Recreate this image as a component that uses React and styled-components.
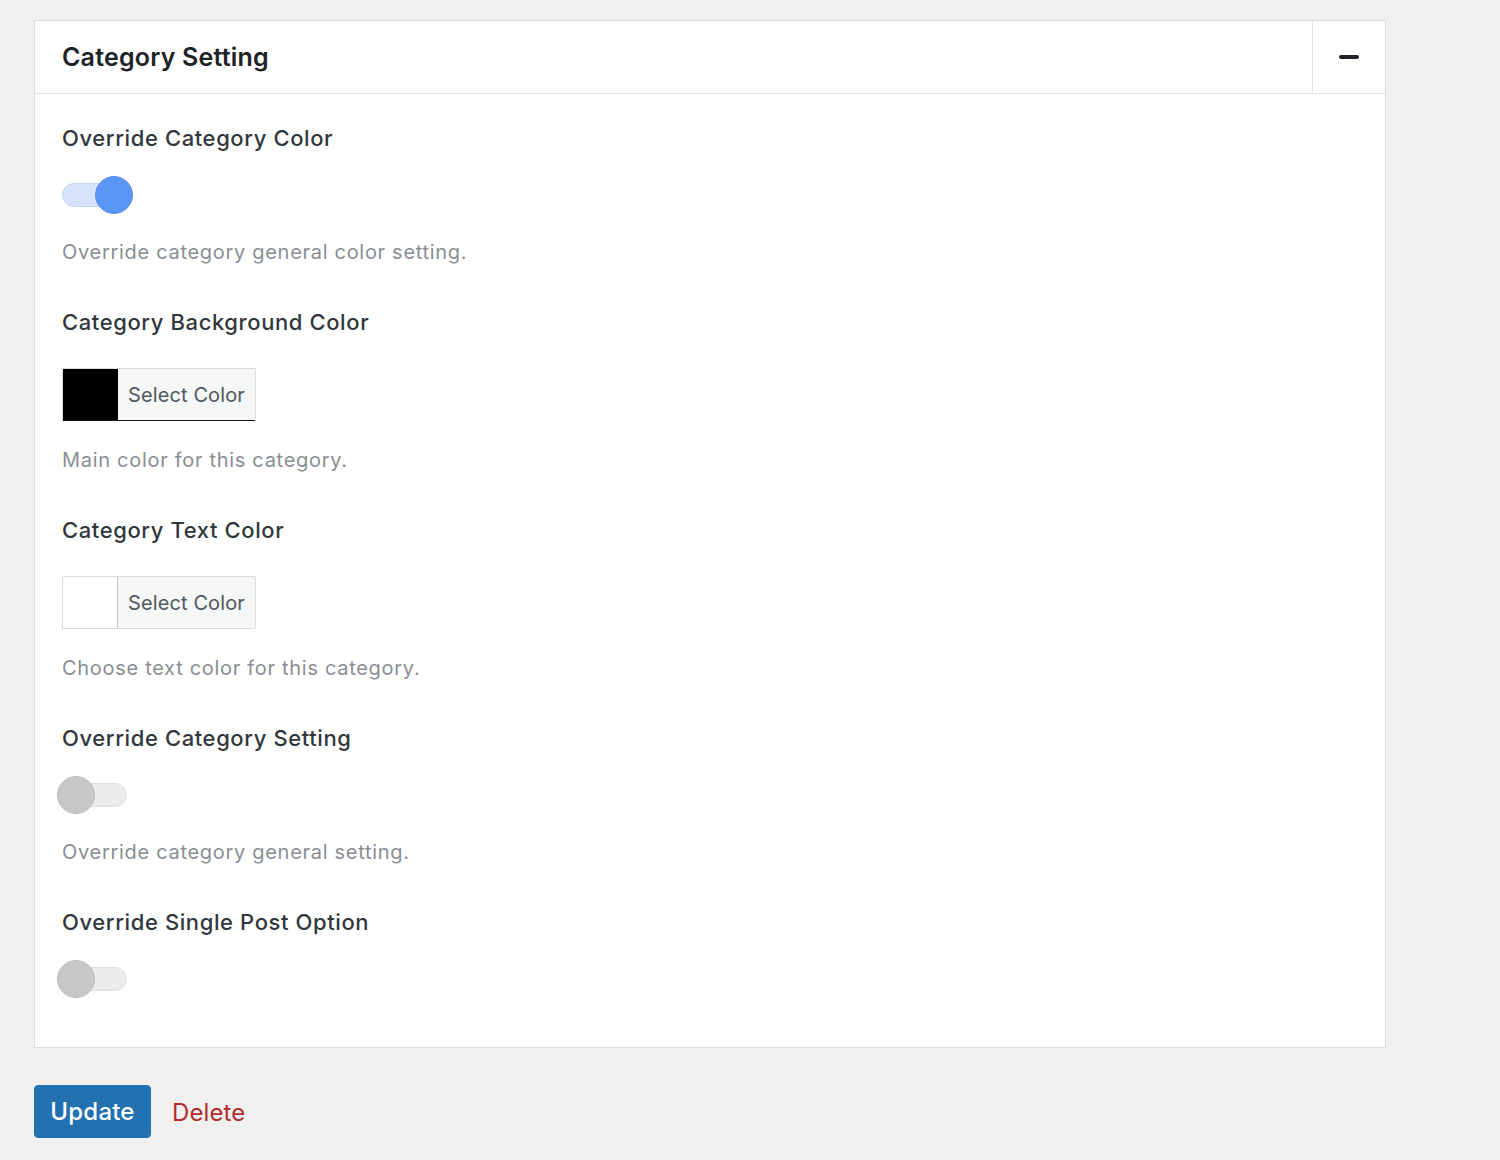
import React from "react";
import styled, { createGlobalStyle } from "styled-components";

const Global = createGlobalStyle`
  html, body { margin: 0; padding: 0; background: #f0f0f1; }
  body { font-family: Inter, "Noto Sans", "Liberation Sans", sans-serif; -webkit-font-smoothing: antialiased; }
  * { box-sizing: border-box; }
`;

const Page = styled.div`
  padding: 20px 0 0 34px;
  min-height: 1160px;
`;

const Panel = styled.div`
  width: 1352px;
  background: #fff;
  border: 1px solid #dcdcde;
`;

const Header = styled.div`
  display: flex;
  align-items: stretch;
  height: 73px;
  border-bottom: 1px solid #e2e2e4;
`;

const Title = styled.h2`
  flex: 1;
  margin: 0;
  display: flex;
  align-items: center;
  padding-left: 27px;
  font-size: 25px;
  font-weight: 600;
  color: #1d2327;
  letter-spacing: 0.2px;
`;

const ToggleBox = styled.button`
  width: 73px;
  border: none;
  border-left: 1px solid #e2e2e4;
  background: transparent;
  display: flex;
  align-items: center;
  justify-content: center;
  padding: 0;
  cursor: pointer;
`;

const Minus = styled.span`
  display: block;
  width: 20px;
  height: 4px;
  border-radius: 2px;
  background: #1d2327;
`;

const Body = styled.div`
  padding: 29px 27px 49px;
  display: flex;
  flex-direction: column;
  gap: 41px;
`;

const Field = styled.div`
  display: flex;
  flex-direction: column;
  align-items: flex-start;
`;

const Label = styled.div`
  font-size: 22px;
  line-height: 30px;
  color: #32373c;
  font-weight: 500;
  letter-spacing: 0.6px;
`;

const Control = styled.div`
  margin-top: ${p => (p.$wide ? 31 : 23)}px;
`;

const Desc = styled.div`
  margin-top: ${p => (p.$wide ? 25 : 24)}px;
  font-size: 20px;
  line-height: 28px;
  color: #8a8e93;
  letter-spacing: 0.7px;
`;

const Switch = styled.div`
  position: relative;
  width: 65px;
  height: 38px;
  display: flex;
  align-items: center;
`;

const Track = styled.div`
  width: 65px;
  height: 24px;
  border-radius: 12px;
  background: ${p => (p.$on ? "#d6e3fb" : "#ececec")};
  border: 1px solid ${p => (p.$on ? "#c5d5f3" : "#e0e0e0")};
`;

const Knob = styled.div`
  position: absolute;
  top: 0;
  left: ${p => (p.$on ? "33px" : "-5px")};
  width: 38px;
  height: 38px;
  border-radius: 50%;
  background: ${p => (p.$on ? "#5b95f6" : "#c8c8c8")};
  border: 1px solid ${p => (p.$on ? "#5a8ff0" : "#bcbcbc")};
`;

const ColorButton = styled.div`
  display: flex;
  width: 194px;
  height: 53px;
  border: 1px solid #dcdcde;
  border-bottom-color: ${p => (p.$dark ? "#111" : "#dcdcde")};
  border-radius: 0 2px 2px 0;
  overflow: hidden;
`;

const Swatch = styled.div`
  width: 55px;
  background: ${p => p.$color};
  border-right: 1px solid ${p => (p.$color === "#000" ? "#000" : "#c3c4c7")};
`;

const ColorLabel = styled.div`
  flex: 1;
  background: #f6f7f7;
  display: flex;
  align-items: center;
  justify-content: center;
  font-size: 20px;
  color: #50575e;
  letter-spacing: 0.1px;
`;

const Actions = styled.div`
  display: flex;
  align-items: center;
  gap: 21px;
  margin-top: 37px;
`;

const Primary = styled.button`
  height: 53px;
  width: 117px;
  background: #2271b1;
  border: 1px solid #2271b1;
  border-radius: 4px;
  color: #fff;
  font-family: inherit;
  font-size: 24px;
  font-weight: 500;
  letter-spacing: 0.2px;
  cursor: pointer;
`;

const DeleteLink = styled.a`
  color: #b32d2e;
  font-size: 24px;
  letter-spacing: 0.1px;
  text-decoration: none;
  margin-top: 2px;
`;

const Toggle = ({ on }) => (
  <Switch>
    <Track $on={on} />
    <Knob $on={on} />
  </Switch>
);

const ColorPicker = ({ color }) => (
  <ColorButton $dark={color === "#000"}>
    <Swatch $color={color} />
    <ColorLabel>Select Color</ColorLabel>
  </ColorButton>
);

export default function App() {
  return (
    <Page>
      <Global />
      <Panel>
        <Header>
          <Title>Category Setting</Title>
          <ToggleBox aria-label="Collapse">
            <Minus />
          </ToggleBox>
        </Header>
        <Body>
          <Field>
            <Label>Override Category Color</Label>
            <Control><Toggle on /></Control>
            <Desc>Override category general color setting.</Desc>
          </Field>
          <Field>
            <Label>Category Background Color</Label>
            <Control $wide><ColorPicker color="#000" /></Control>
            <Desc $wide>Main color for this category.</Desc>
          </Field>
          <Field>
            <Label>Category Text Color</Label>
            <Control $wide><ColorPicker color="#fff" /></Control>
            <Desc $wide>Choose text color for this category.</Desc>
          </Field>
          <Field>
            <Label>Override Category Setting</Label>
            <Control><Toggle /></Control>
            <Desc>Override category general setting.</Desc>
          </Field>
          <Field>
            <Label>Override Single Post Option</Label>
            <Control><Toggle /></Control>
          </Field>
        </Body>
      </Panel>
      <Actions>
        <Primary>Update</Primary>
        <DeleteLink href="#">Delete</DeleteLink>
      </Actions>
    </Page>
  );
}
